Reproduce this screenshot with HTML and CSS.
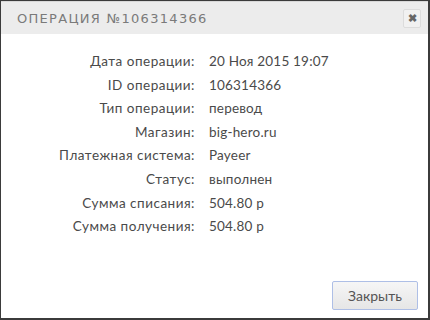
FILE: index.html
```html
<!DOCTYPE html>
<html lang="ru">

<head>
    <meta charset="UTF-8" />
    <title>Операция №106314366</title>
    <link rel="stylesheet" href="styles.css">
</head>

<body>
    <div class="dialog">
        <div class="dialog-head">
            <span class="dialog-title">Операция №106314366</span>
            <button class="close-x" title="Закрыть">&#10006;</button>
        </div>
        <div class="dialog-body">
            <dl class="info">
                <dt>Дата операции:</dt>
                <dd>20 Ноя 2015 19:07</dd>
                <dt>ID операции:</dt>
                <dd>106314366</dd>
                <dt>Тип операции:</dt>
                <dd>перевод</dd>
                <dt>Магазин:</dt>
                <dd>big-hero.ru</dd>
                <dt>Платежная система:</dt>
                <dd>Payeer</dd>
                <dt>Статус:</dt>
                <dd>выполнен</dd>
                <dt>Сумма списания:</dt>
                <dd>504.80 р</dd>
                <dt>Сумма получения:</dt>
                <dd>504.80 р</dd>
            </dl>
        </div>
        <div class="dialog-foot">
            <button class="btn-close">Закрыть</button>
        </div>
    </div>
</body>

</html>
```

FILE: styles.css
```css
* {
    margin: 0;
    padding: 0;
    box-sizing: border-box;
}

body {
    font-family: 'Lato', sans-serif;
    background-color: #3b3b3b;
    width: 430px;
    height: 320px;
    padding: 1px 2px 2px 1px;
}

.dialog {
    height: 100%;
    background-color: #ffffff;
    display: flex;
    flex-direction: column;
}

.dialog-head {
    height: 33px;
    background-color: #ececec;
    border-top: 1px solid #d8d8d8;
    display: flex;
    align-items: center;
    justify-content: space-between;
    padding: 0 7px 0 16px;
}

.dialog-title {
    text-transform: uppercase;
    font-family: 'DejaVu Sans', sans-serif;
    font-size: 13px;
    letter-spacing: 1.3px;
    color: #7a7a7a;
}

.close-x {
    width: 18px;
    height: 19px;
    border: 1px solid #dcdcdc;
    border-radius: 2px;
    background-color: #f1f1f1;
    color: #666666;
    font-size: 11px;
    font-weight: bold;
    line-height: 1;
    cursor: pointer;
}

.dialog-body {
    flex: 1;
    padding-top: 16px;
}

.info {
    display: grid;
    grid-template-columns: 194px auto;
    column-gap: 14px;
    font-size: 13.5px;
    line-height: 23.6px;
    color: #4a4a4a;
    letter-spacing: 0.2px;
}

.info dt {
    text-align: right;
    letter-spacing: 0.5px;
}

.dialog-foot {
    display: flex;
    justify-content: flex-end;
    padding: 0 10px 8px 0;
}

.btn-close {
    width: 86px;
    height: 29px;
    border: 1px solid #aebfe6;
    border-radius: 2px;
    background: linear-gradient(#f6f6f6, #e6e6e6);
    color: #555555;
    font-family: 'Lato', sans-serif;
    font-size: 14px;
    cursor: pointer;
}
```
